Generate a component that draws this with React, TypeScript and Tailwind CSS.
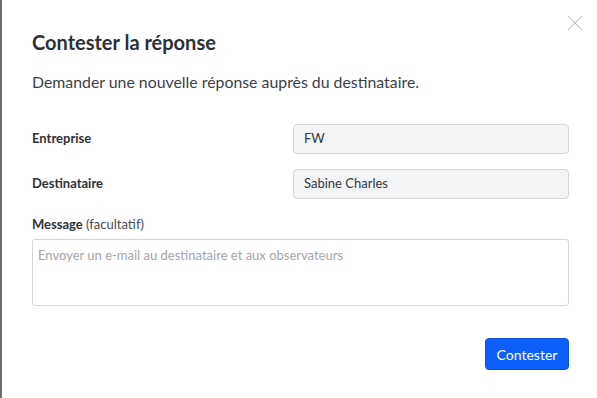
import React, { useState } from 'react';
import { X } from 'lucide-react';

const App: React.FC = () => {
  const [message, setMessage] = useState('');

  return (
    <div className="relative w-[597px] h-[398px] bg-white border-l-2 border-[#6e6e6e] font-['Lato',sans-serif] text-[#2f3237] overflow-hidden">
      <button className="absolute right-[9px] top-[10px] text-[#b8b8b8]" title="Fermer">
        <X size={26} strokeWidth={0.95} />
      </button>

      <div className="pl-[30px] pr-[28px] pt-[28px]">
        <h2 className="text-[20px] leading-[28px] font-bold text-[#2d3036]">Contester la réponse</h2>
        <p className="mt-[14px] text-[15.85px] leading-[24px] text-[#3b3e44]">
          Demander une nouvelle réponse auprès du destinataire.
        </p>

        <div className="mt-[30px] flex items-center">
          <label className="flex-1 text-[13px] font-bold">Entreprise</label>
          <div className="w-[276px] h-[30px] flex items-center px-[10px] bg-[#f3f4f6] border border-[#d4d5d9] rounded-[4px] text-[13px] text-[#35383d]">
            FW
          </div>
        </div>

        <div className="mt-[15px] flex items-center">
          <label className="flex-1 text-[13px] font-bold">Destinataire</label>
          <div className="w-[276px] h-[30px] flex items-center px-[10px] bg-[#f3f4f6] border border-[#d4d5d9] rounded-[4px] text-[13px] text-[#35383d]">
            Sabine Charles
          </div>
        </div>

        <div className="mt-[15px] text-[13px] leading-[20px]">
          <span className="font-bold">Message</span> <span className="text-[#4a4d52]">(facultatif)</span>
        </div>
        <textarea
          value={message}
          onChange={(e) => setMessage(e.target.value)}
          placeholder="Envoyer un e-mail au destinataire et aux observateurs"
          className="mt-[5px] block w-[537px] h-[67px] px-[5px] py-[6px] text-[13px] leading-[18px] border border-[#d4d5d9] rounded-[3px] resize-none outline-none placeholder:text-[#a3a6ab]"
        />

        <div className="mt-[32px] flex justify-end">
          <button className="w-[84px] h-[32px] rounded-[4px] bg-[#0d5ffc] border border-[#0b52dc] text-white text-[14px]">
            Contester
          </button>
        </div>
      </div>
    </div>
  );
};

export default App;
